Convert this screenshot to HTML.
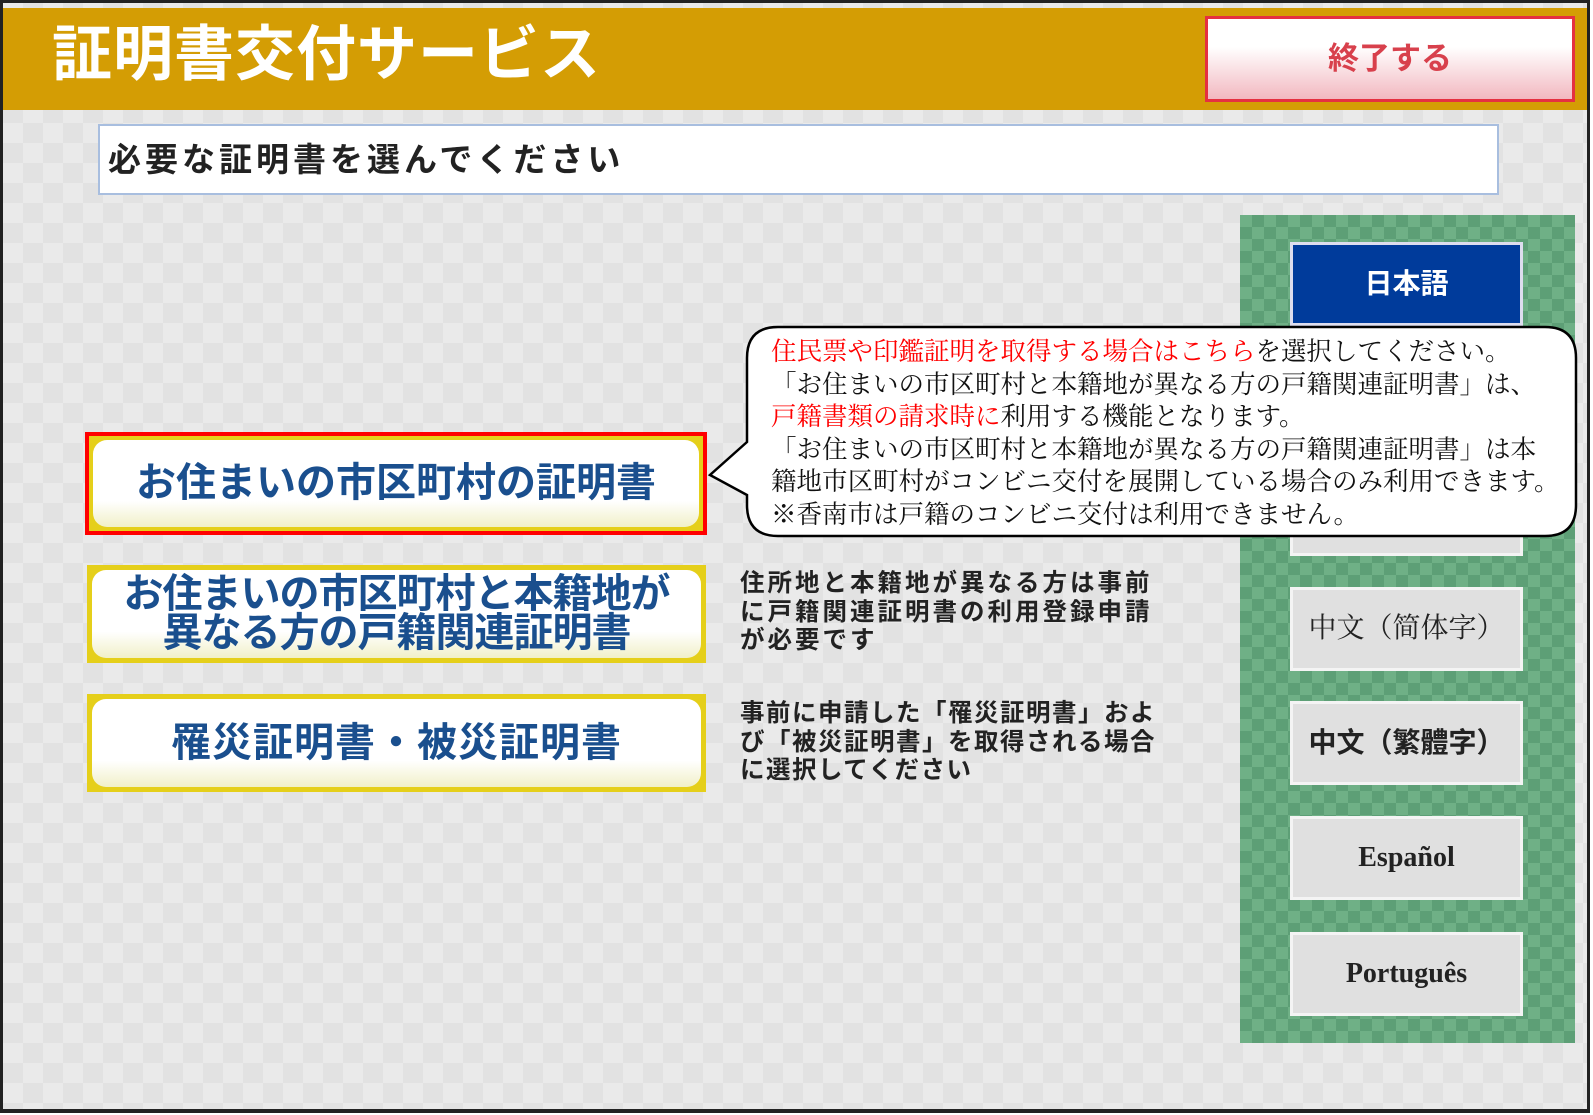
<!DOCTYPE html>
<html><head><meta charset="utf-8"><style>
*{margin:0;padding:0;box-sizing:border-box}
body{width:1593px;height:1115px;background:#fff;position:relative;overflow:hidden;font-family:"Liberation Sans","Noto Sans CJK JP",sans-serif}
.frame{position:absolute;left:0;top:0;width:1590px;height:1113px;border:3px solid #222;border-bottom-width:4px;
background-color:#eaeaea;background-image:linear-gradient(45deg,#e2e2e2 25%,transparent 25%,transparent 75%,#e2e2e2 75%),linear-gradient(45deg,#e2e2e2 25%,transparent 25%,transparent 75%,#e2e2e2 75%);background-size:40px 40px;background-position:0 0,20px 20px}
.hdr{position:absolute;left:3px;top:8px;width:1584px;height:102px;background:#d49d04}
.title{position:absolute;left:52px;top:20px;color:#fff;font-size:60px;font-weight:bold;letter-spacing:1px;line-height:70px}
.exit{position:absolute;left:1205px;top:16px;width:370px;height:86px;border:3px solid #e53040;background:linear-gradient(#fff 0%,#fff 35%,#f2b8c0 100%);color:#d8404c;font-weight:bold;font-size:31px;text-align:center;line-height:80px}
.ins{position:absolute;left:98px;top:124px;width:1401px;height:71px;background:#fff;border:2px solid #a8bedf;font-size:33px;font-weight:bold;color:#222;line-height:67px;padding-left:8px;letter-spacing:4px}
.green{position:absolute;left:1240px;top:215px;width:335px;height:828px;background-color:#6fb086;background-image:linear-gradient(45deg,#5d9f76 25%,transparent 25%,transparent 75%,#5d9f76 75%),linear-gradient(45deg,#5d9f76 25%,transparent 25%,transparent 75%,#5d9f76 75%);background-size:24px 24px;background-position:0 0,12px 12px}
.lb{position:absolute;left:1290px;width:233px;height:84px;background:#e0e0e0;border:3px solid #f4f4f4;text-align:center;line-height:78px;font-size:28px;font-weight:bold;color:#222;font-family:"Liberation Serif","Noto Serif CJK SC",serif}
.btn{position:absolute;left:87px;width:619px;height:98px;background:#e5cf1a;padding:5px}
.btn div{width:100%;height:100%;border-radius:14px;background:linear-gradient(#fff 0%,#fff 70%,#f1f0c8 100%);color:#1a4f8e;font-weight:bold;font-size:40px;display:flex;align-items:center;justify-content:center;text-align:center;line-height:39px}
.desc{position:absolute;left:740px;font-size:24.5px;font-weight:bold;color:#222;line-height:28.5px;letter-spacing:3px;white-space:nowrap}
.red{color:#f00}
</style></head><body>
<div class="frame"></div>
<div class="hdr"></div>
<div class="title">証明書交付サービス</div>
<div class="exit">終了する</div>
<div class="ins">必要な証明書を選んでください</div>
<div class="green"></div>
<div class="lb" style="top:242px;background:#003b9b;border-color:#dde;color:#fff;font-family:'Liberation Sans','Noto Sans CJK JP',sans-serif">日本語</div>
<div class="lb" style="top:357px"></div>
<div class="lb" style="top:472px"></div>
<div class="lb" style="top:587px;font-weight:normal">中文（简体字）</div>
<div class="lb" style="top:701px;font-family:'Liberation Sans','Noto Sans CJK TC',sans-serif">中文（繁體字）</div>
<div class="lb" style="top:816px">Español</div>
<div class="lb" style="top:932px">Português</div>

<div class="btn" style="top:432px;height:103px;border:4px solid #f00;left:85px;width:622px;padding:4px"><div>お住まいの市区町村の証明書</div></div>
<div class="btn" style="top:565px"><div style="letter-spacing:-1px">お住まいの市区町村と本籍地が<br>異なる方の戸籍関連証明書</div></div>
<div class="btn" style="top:694px"><div style="letter-spacing:1px">罹災証明書・被災証明書</div></div>
<div class="desc" style="top:570px">住所地と本籍地が異なる方は事前<br>に戸籍関連証明書の利用登録申請<br>が必要です</div>
<div class="desc" style="top:700px;letter-spacing:1.5px">事前に申請した「罹災証明書」およ<br>び「被災証明書」を取得される場合<br>に選択してください</div>

<svg style="position:absolute;left:0;top:0" width="1593" height="1115">
<path d="M778 327 H1545 Q1576 327 1576 358 V505 Q1576 536 1545 536 H778 Q747 536 747 505 V495 L710 475 L747 442 V358 Q747 327 778 327 Z" fill="#fff" stroke="#000" stroke-width="2.5"/>
</svg>
<div style="position:absolute;left:771px;top:336px;font-size:25.5px;line-height:32.5px;color:#111;font-family:'Liberation Serif','Noto Serif CJK JP',serif;white-space:nowrap">
<span class="red">住民票や印鑑証明を取得する場合はこちら</span>を選択してください。<br>
「お住まいの市区町村と本籍地が異なる方の戸籍関連証明書」は、<br>
<span class="red">戸籍書類の請求時に</span>利用する機能となります。<br>
「お住まいの市区町村と本籍地が異なる方の戸籍関連証明書」は本<br>
籍地市区町村がコンビニ交付を展開している場合のみ利用できます。<br>
※香南市は戸籍のコンビニ交付は利用できません。
</div>
</body></html>
